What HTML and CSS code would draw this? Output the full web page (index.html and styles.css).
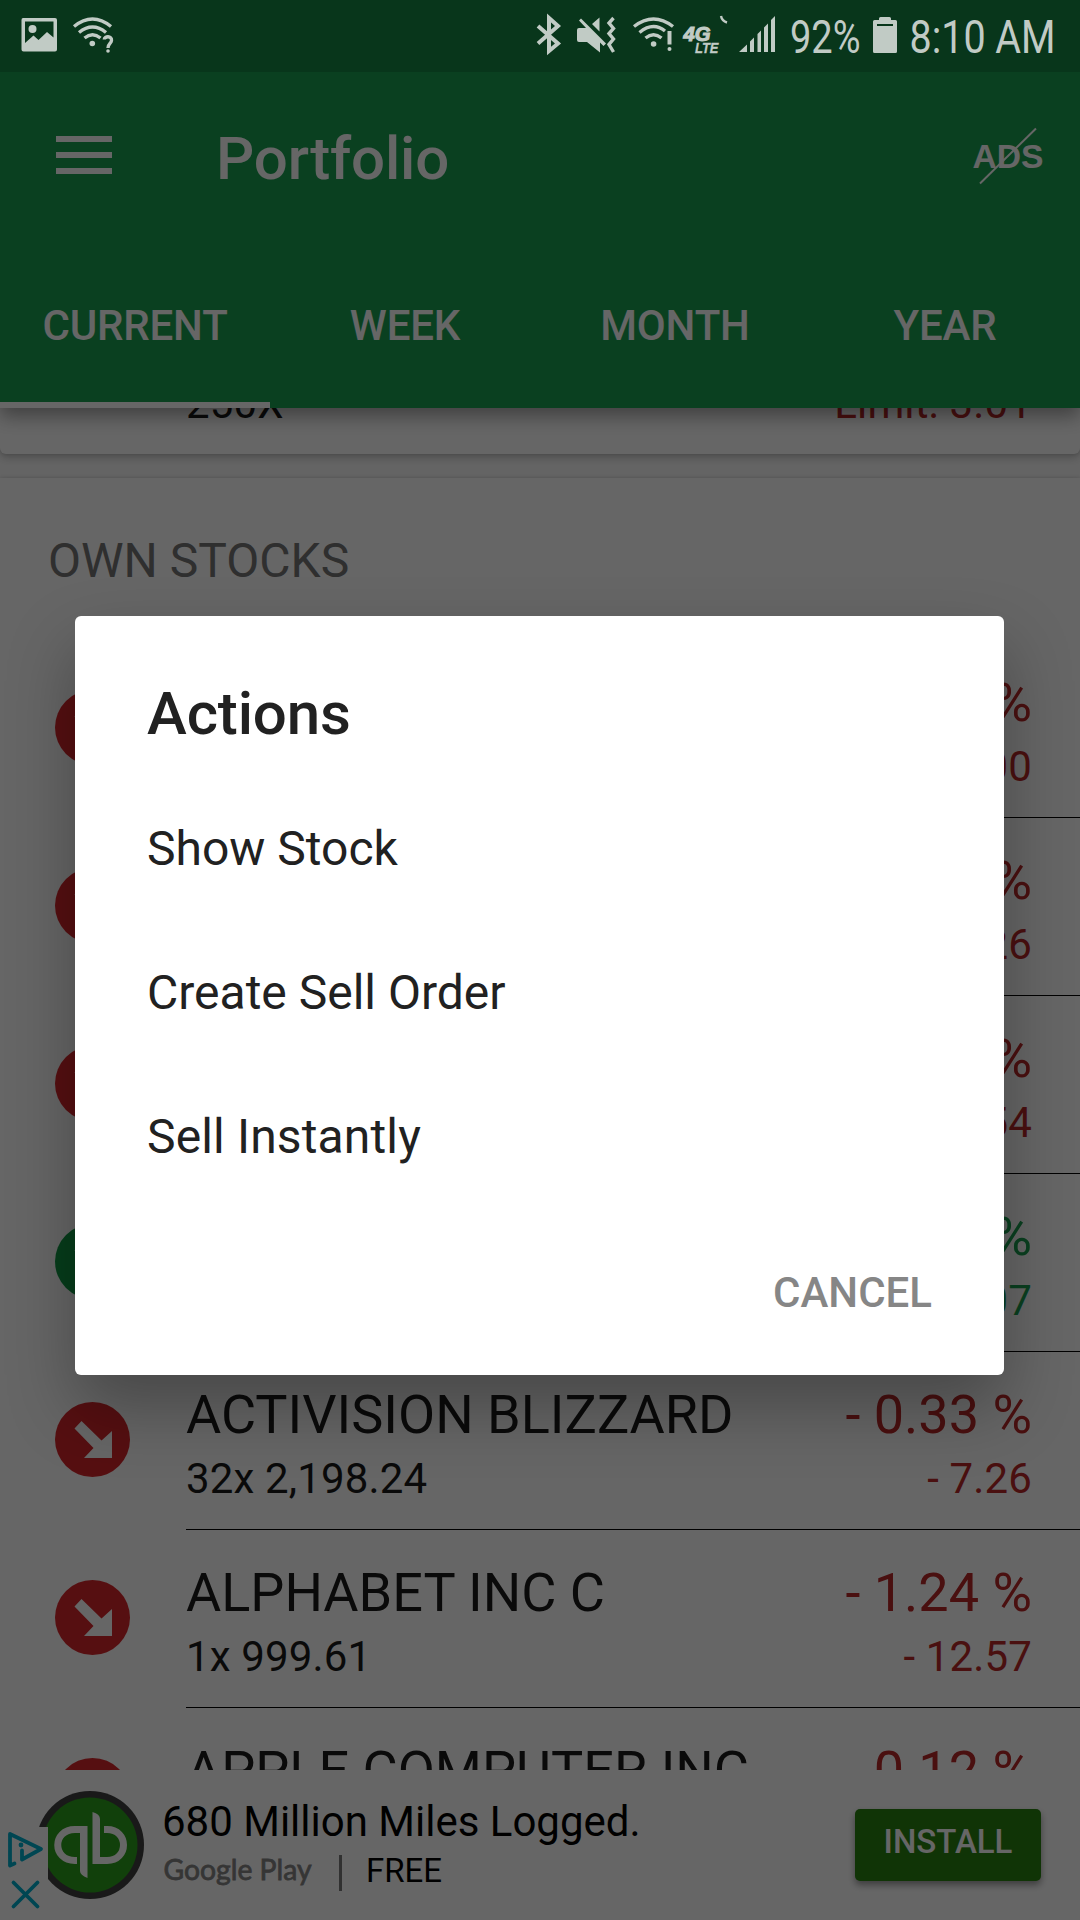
FILE: index.html
```html
<!DOCTYPE html>
<html lang="en">
<head>
<meta charset="utf-8">
<title>Portfolio</title>
<link rel="stylesheet" href="styles.css">
</head>
<body>
<svg class="defs" width="0" height="0" aria-hidden="true">
  <symbol id="down" viewBox="0 0 75 75">
    <circle cx="37.5" cy="37.5" r="37.5" fill="currentColor"/>
    <path d="M26.5 19 19.5 26.5 38.5 46 29 56H57V29L46.500 38.500Z" fill="#fff"/>
  </symbol>
</svg>
<div class="screen">
  <header class="status">
    <svg class="status-icon" width="66" height="72" viewBox="0 0 66 72">
      <path fill-rule="evenodd" d="M23 18H55Q57 18 57 20V49.500Q57 51.500 55 51.500H23.500Q21.500 51.500 21.500 49.500V20Q21.500 18 23 18ZM25 21.500V43L33.500 35.500 38.500 40 47 32 53.500 37.500V21.500Z"/>
      <circle cx="32.500" cy="29" r="4"/>
    </svg>
    <svg class="status-icon" width="54" height="72" viewBox="66 0 54 72">
      <g class="stroke" stroke-width="3.400">
        <path d="M74 26.500Q92.500 11.500 111 26.500M79 32.500Q92.500 21.500 106 32.500M84.500 38Q92.500 31.500 100.500 38"/>
        <path d="M104.300 39.500C104.300 36 112 35.500 111.500 40.500C111.300 43.500 108 43.500 108 48"/>
      </g>
      <circle cx="92.300" cy="43.500" r="2.800"/><circle cx="108" cy="51" r="1.800"/>
    </svg>
    <span class="spacer"></span>
    <svg class="status-icon" width="38" height="72" viewBox="530 0 38 72">
      <path class="stroke" stroke-width="4" d="M538 26 558 43.500 549 51V18L558 26 538 43.500"/>
    </svg>
    <svg class="status-icon" width="57" height="72" viewBox="568 0 57 72">
      <path d="M592 24 599.500 17.500V31.500ZM577 30Q577 28 579 28H586L579 20.500 581 18.500 606 43.500 603.500 46 600 42.500V52.500L587 42H579Q577 42 577 40Z"/>
      <path class="stroke" stroke-width="3.400" d="M613.500 18 609 23 613.500 28.500 609 33.500 613.500 39 609 44.500 613.500 52"/>
    </svg>
    <svg class="status-icon" width="53" height="72" viewBox="625 0 53 72">
      <path class="stroke" stroke-width="3.400" d="M634 26.500Q653.500 11.500 673 26.500M639.500 32.500Q653 21.500 665 31M645.500 38Q653.500 31.500 661.500 38"/>
      <circle cx="653.600" cy="44" r="2.800"/><path d="M667.500 31H671.500V44.500H667.500Z"/><circle cx="669.500" cy="49" r="2"/>
    </svg>
    <svg class="status-icon" width="56" height="72" viewBox="678 0 56 72">
      <text class="net heavy" x="683.500" y="40.500" font-size="20" textLength="27" lengthAdjust="spacingAndGlyphs">4G</text>
      <text class="net" x="695" y="52.500" font-size="15.500" textLength="23.500" lengthAdjust="spacingAndGlyphs">LTE</text>
      <path class="stroke" stroke-width="2.400" d="M721 16Q722 21 727 22.500"/>
    </svg>
    <svg class="status-icon" width="50" height="72" viewBox="734 0 50 72">
      <path d="M739 52 747 44.500V52ZM750 41.500 754 37.500V52H750ZM757.500 34 761 30.500V52H757.500ZM764 27.500 768 23.500V52H764ZM771 20 775 16V52H771Z"/>
    </svg>
    <svg class="status-icon" width="82" height="72" viewBox="784 0 82 72">
      <text class="clock" x="790" y="52.500" textLength="70.500" lengthAdjust="spacingAndGlyphs">92%</text>
    </svg>
    <svg class="status-icon" width="38" height="72" viewBox="866 0 38 72">
      <path fill-rule="evenodd" d="M879 20V18.500Q879 17 880.500 17H889.500Q891 17 891 18.500V20H895.500Q897 20 897 21.500V51.500Q897 53 895.500 53H874.500Q873 53 873 51.500V21.500Q873 20 874.500 20ZM877 24V26H893V24Z"/>
    </svg>
    <svg class="status-icon" width="176" height="72" viewBox="904 0 176 72">
      <text class="clock" x="909.500" y="52.500" textLength="146" lengthAdjust="spacingAndGlyphs">8:10 AM</text>
    </svg>
  </header>

  <div class="appbar">
    <div class="toolbar">
      <svg width="56" height="38" viewBox="0 0 56 38" fill="#fff"><path d="M0 0H56V6H0ZM0 16H56V22H0ZM0 32H56V38H0Z"/></svg>
      <h1 class="title">Portfolio</h1>
      <svg class="ads" width="76" height="60" viewBox="970 126 76 60">
        <text x="972.500" y="167.500" textLength="71" lengthAdjust="spacingAndGlyphs" fill="#fff">ADS</text>
        <path d="M980 183.500 1036 128.500" stroke="#fff" stroke-width="2"/>
      </svg>
    </div>
    <nav class="tabs">
      <span class="tab active">CURRENT</span>
      <span class="tab">WEEK</span>
      <span class="tab">MONTH</span>
      <span class="tab">YEAR</span>
    </nav>
  </div>

  <main class="list">
    <section class="card orders">
      <div class="row last"><div class="body"><div class="line sub"><span>250X</span><span class="neg limit">Limit: 3.01</span></div></div></div>
    </section>
    <section class="card stocks">
      <h2 class="heading">OWN STOCKS</h2>
      <div class="row"><svg class="dot neg-dot"><use href="#down"/></svg><div class="body neg"><div class="line name"><span></span><span>%</span></div><div class="line sub"><span></span><span>00</span></div></div></div>
      <div class="row"><svg class="dot neg-dot"><use href="#down"/></svg><div class="body neg"><div class="line name"><span></span><span>%</span></div><div class="line sub"><span></span><span>26</span></div></div></div>
      <div class="row"><svg class="dot neg-dot"><use href="#down"/></svg><div class="body neg"><div class="line name"><span></span><span>%</span></div><div class="line sub"><span></span><span>54</span></div></div></div>
      <div class="row"><svg class="dot pos-dot"><use href="#down"/></svg><div class="body pos"><div class="line name"><span></span><span>%</span></div><div class="line sub"><span></span><span>07</span></div></div></div>
      <div class="row"><svg class="dot neg-dot"><use href="#down"/></svg><div class="body"><div class="line name"><span>ACTIVISION BLIZZARD</span><span class="neg">- 0.33 %</span></div><div class="line sub"><span>32x 2,198.24</span><span class="neg">- 7.26</span></div></div></div>
      <div class="row"><svg class="dot neg-dot"><use href="#down"/></svg><div class="body"><div class="line name"><span>ALPHABET INC C</span><span class="neg">- 1.24 %</span></div><div class="line sub"><span>1x 999.61</span><span class="neg">- 12.57</span></div></div></div>
      <div class="row"><svg class="dot neg-dot"><use href="#down"/></svg><div class="body"><div class="line name"><span>APPLE COMPUTER INC</span><span class="neg">0.12 %</span></div></div></div>
    </section>
  </main>

  <footer class="ad">
    <svg width="150" height="150" viewBox="0 1770 150 150">
      <circle cx="90" cy="1845" r="54" fill="#3f3f3f"/>
      <circle cx="90" cy="1845" r="47.500" fill="#2ca01c"/>
      <g fill="none" stroke="#fff" stroke-width="7">
        <path d="M84 1829.500H75C52 1829.500 52 1860.500 75 1860.500H77"/>
        <path d="M104 1829.500H107C129 1829.500 129 1860.500 107 1860.500H96"/>
      </g>
      <path d="M80 1826H87.500V1878Q80 1875 80 1871ZM92.500 1812Q100 1814 100 1819V1864H92.500Z" fill="#fff"/>
      <path d="M0 1827H48V1920H0Z" fill="#fff"/>
      <g fill="none" stroke="#00aecd" stroke-width="3.800" stroke-linejoin="round" stroke-linecap="round">
        <path d="M14.500 1863.500 10 1865.500V1834L41 1849 22 1859.500V1850.500"/>
        <path d="M13.500 1882.500 37.500 1906.500M37.500 1882.500 13.500 1906.500"/>
      </g>
      <circle cx="21" cy="1845" r="2.400" fill="#00aecd"/>
    </svg>
    <div class="ad-copy">
      <div class="ad-title">680 Million Miles Logged.</div>
      <div class="ad-meta">
        <svg width="152" height="40" viewBox="0 0 152 40"><text class="play" x="1.500" y="29" textLength="148" lengthAdjust="spacingAndGlyphs">Google Play</text></svg>
        <span class="bar"></span>
        <span class="free">FREE</span>
      </div>
    </div>
    <div class="install">INSTALL</div>
  </footer>

  <div class="scrim">
    <div class="dialog" role="dialog">
      <h3 class="dialog-title">Actions</h3>
      <div class="option">Show Stock</div>
      <div class="option">Create Sell Order</div>
      <div class="option loose">Sell Instantly</div>
      <div class="dialog-actions">CANCEL</div>
    </div>
  </div>
</div>
</body>
</html>
```
FILE: styles.css
```css
* { box-sizing: border-box; }
body { margin: 0; font-family: Roboto, "Liberation Sans", sans-serif; color: #1a1a1a; }
h1, h2, h3 { margin: 0; }
svg { display: block; flex: none; }
.defs { position: absolute; }

.screen { position: relative; width: 1080px; height: 1920px; overflow: hidden; display: flex; flex-direction: column; background: #fff; }

.status { position: relative; z-index: 3; flex: none; display: flex; height: 72px; background: #08361b; }
.status-icon { fill: #c1cbc5; color: #c1cbc5; }
.stroke { fill: none; stroke: currentColor; }
.spacer { flex: 1; }
.clock { font-size: 45.5px; }
.net { font-family: "Liberation Sans", sans-serif; font-weight: 700; font-style: italic; stroke: currentColor; stroke-width: .3px; }
.heavy { stroke-width: 1.1px; }

.appbar { position: relative; z-index: 1; flex: none; height: 336px; background: #19a050; color: #fff; box-shadow: 0 8px 18px rgba(0, 0, 0, .38); }
.toolbar { display: flex; align-items: center; height: 168px; padding: 0 34px 0 56px; }
.toolbar > svg:first-child { margin-top: -2px; }
.title { flex: 1; margin-left: 104px; font-size: 60px; font-weight: 500; line-height: 72px; letter-spacing: -.15px; margin-top: 5px; }
.ads { font: 700 33.5px "Liberation Sans", sans-serif; }
.tabs { display: flex; height: 168px; }
.tab { flex: 1; text-align: center; font-size: 42px; font-weight: 500; line-height: 171px; letter-spacing: -.15px; }
.active { border-bottom: 6px solid #fff; }

.list { flex: 1; min-height: 0; overflow: hidden; background: #fafafa; }
.card { background: #fff; border-radius: 6px; box-shadow: 0 4px 8px rgba(0, 0, 0, .2), 0 0 4px rgba(0, 0, 0, .15); }
.orders { margin: -132px 0 24px; }
.stocks { border-radius: 0; }
.heading { height: 162px; padding-left: 48px; font-size: 48px; font-weight: 400; line-height: 165px; color: #757575; }
.row { display: flex; height: 178px; padding-left: 55px; }
.dot { width: 75px; height: 75px; margin: 50px 56px 0 0; }
.neg-dot { color: #d7262b; }
.pos-dot { color: #109a45; }
.body { flex: 1; height: 178px; padding: 27px 48px 0 0; border-bottom: 1px solid #000; }
.last { padding-left: 186px; }
.last .body { border: 0; padding-top: 100px; }
.line { display: flex; justify-content: space-between; white-space: nowrap; }
.name { font-size: 54px; line-height: 72px; }
.sub { font-size: 42px; line-height: 56px; letter-spacing: .15px; }
.neg { color: #b92828; }
.pos { color: #1aa050; }

.ad { flex: none; display: flex; height: 150px; background: #fff; color: #000; }
.ad-copy { flex: 1; padding: 27px 0 0 12px; }
.ad-title { font-size: 42px; line-height: 50px; }
.ad-meta { display: flex; align-items: center; height: 40px; margin-top: 4px; }
.play { font: 400 29.5px Lato, sans-serif; fill: #858585; stroke: #858585; stroke-width: .8px; }
.bar { width: 3px; height: 36px; margin: 3px 24px 0 25px; background: #7a7a7a; }
.free { font-size: 33px; margin-top: -2px; }
.install { width: 186px; height: 72px; margin: 39px 39px 0 0; border-radius: 5px; background: #28820f; color: #fff; font-size: 33px; font-weight: 500; line-height: 66px; text-align: center; box-shadow: 0 4px 7px rgba(0, 0, 0, .4); }

.scrim { position: absolute; inset: 0; z-index: 2; background: rgba(0, 0, 0, .6); padding: 616px 76px 0 75px; }
.dialog { height: 759px; padding: 60px 72px 0; border-radius: 6px; background: #fff; color: #212121; box-shadow: 0 32px 68px rgba(0, 0, 0, .3); }
.dialog-title { height: 99px; font-size: 60px; font-weight: 500; line-height: 76px; letter-spacing: -.15px; }
.option { height: 144px; font-size: 48px; line-height: 147px; }
.loose { letter-spacing: .15px; }
.dialog-actions { font-size: 42px; font-weight: 500; line-height: 60px; margin-top: 56px; text-align: right; color: #868686; }
```
